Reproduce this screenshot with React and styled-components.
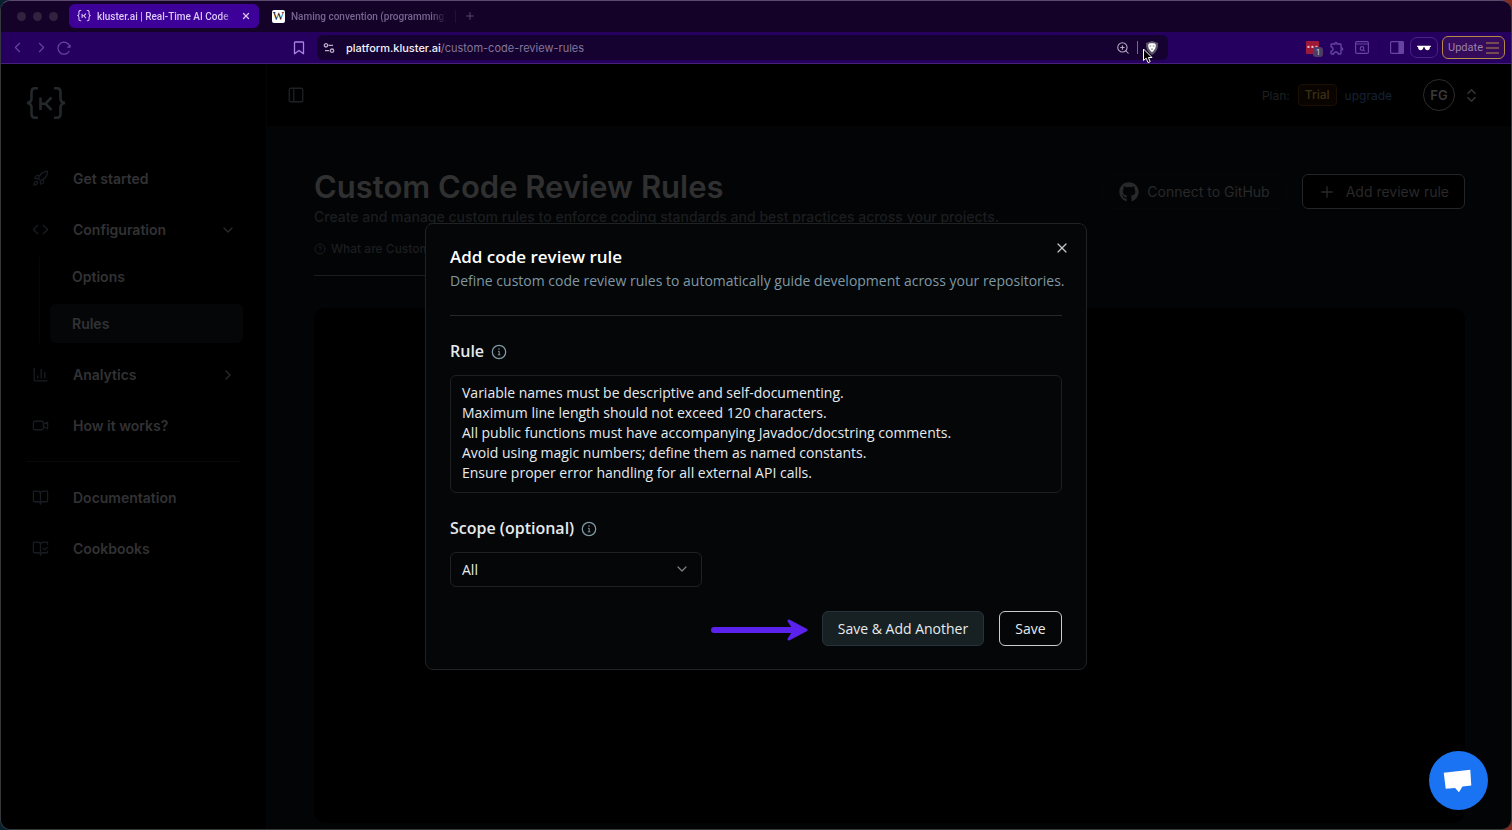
import React from "react";
import styled, { createGlobalStyle, css } from "styled-components";
import {
  Rocket, Code, ChartColumn, Video, BookOpen, BookOpenCheck, ChevronDown, ChevronRight,
  ChevronLeft, PanelLeft, ChevronsUpDown, Plus, CircleHelp, X, ZoomIn,
} from "lucide-react";
import { FaGithub } from "react-icons/fa";
import { MdOutlineExtension } from "react-icons/md";

const Global = createGlobalStyle`
  *, *::before, *::after { box-sizing: border-box; }
  body {
    margin: 0;
    background: linear-gradient(to right, #06202e, #0a0a10 50%, #8a2c1c);
    font-family: Inter, "Liberation Sans", sans-serif;
  }
  button, input, textarea, select { font: inherit; margin: 0; }
  button { cursor: pointer; }
  h1, h2, p { margin: 0; }
  a { color: inherit; text-decoration: none; }
  svg { display: block; flex: none; }
`;

const Browser = styled.div`
  min-height: 100vh;
  display: flex;
  flex-direction: column;
  border: 1px solid #37383c;
  border-top-color: #5a4a6c;
  border-radius: 10px;
  overflow: hidden;
  font-size: 14px;
`;

const TabStrip = styled.div`
  height: 31px;
  flex: none;
  display: flex;
  align-items: center;
  background: #150229;
  padding: 0 16px 1px;
  font-family: Roboto, "Liberation Sans", sans-serif;
  font-size: 10px;
`;

const Lights = styled.div`
  display: flex;
  gap: 7px;
  margin-right: 11px;
`;

const Light = styled.span`
  width: 9px;
  height: 9px;
  border-radius: 50%;
  background: #32213f;
`;

const Tab = styled.div`
  width: ${(p) => (p.$active ? 190 : 196)}px;
  height: 24px;
  border-radius: 6px;
  display: flex;
  align-items: center;
  gap: 6px;
  padding: 0 8px;
  background: ${(p) => (p.$active ? "#3d0098" : "transparent")};
  color: ${(p) => (p.$active ? "#d9c8f5" : "#77648f")};
`;

const TabTitle = styled.span`
  flex: 1;
  min-width: 0;
  overflow: hidden;
  white-space: nowrap;
  font-weight: 500;
  mask-image: linear-gradient(to right, #000 90%, transparent);
`;

const WikiMark = styled.span`
  width: 13px;
  height: 13px;
  margin-left: 5px;
  border-radius: 2px;
  background: #fff;
  color: #111;
  font: 12px/13px "Liberation Serif", serif;
  text-align: center;
`;

const Bare = styled.button`
  display: flex;
  align-items: center;
  justify-content: center;
  padding: 0;
  border: 0;
  background: none;
  color: inherit;
`;

const NewTab = styled(Bare)`
  margin-left: 8px;
  color: #55446c;
`;

const Toolbar = styled.div`
  height: 32px;
  flex: none;
  display: flex;
  align-items: center;
  background: #25005f;
  border-bottom: 1px solid #48207c;
  color: #6645a0;
`;

const NavTools = styled.div`
  width: 316px;
  flex: none;
  display: flex;
  align-items: center;
  gap: 7px;
  padding: 0 12px 0 8px;
  & > :last-child { margin-left: auto; color: #a684e0; }
`;

const AddressBar = styled.div`
  flex: 1;
  min-width: 0;
  height: 25px;
  border-radius: 6px;
  background: #150230;
  display: flex;
  align-items: center;
  gap: 7px;
  padding: 0 9px 0 6px;
  color: #b8aec6;
`;

const Address = styled.div`
  flex: 1;
  min-width: 0;
  padding-left: 4px;
  font-size: 11px;
  color: #83779a;
  & > b { color: #f3f0f8; font-weight: 500; }
`;

const ShieldWrap = styled.span`
  position: relative;
`;

const Cursor = styled.svg`
  position: absolute;
  left: -3px;
  top: 7px;
`;

const Separator = styled.span`
  width: 1px;
  height: 13px;
  background: ${(p) => p.$color};
`;

const Extensions = styled.div`
  width: 343px;
  flex: none;
  display: flex;
  align-items: center;
  justify-content: flex-end;
  gap: 10px;
  padding-right: 6px;
`;

const Extension = styled(Bare)`
  position: relative;
`;

const RedMark = styled.span`
  width: 13px;
  height: 13px;
  border-radius: 1px;
  background: #9e1838;
  color: #e9b8c4;
  font-size: 7px;
  line-height: 12px;
`;

const Count = styled.span`
  position: absolute;
  left: 7px;
  top: 6px;
  width: 10px;
  height: 10px;
  border-radius: 3px;
  background: #4b3d68;
  color: #cfc5dd;
  font-size: 8px;
  line-height: 10px;
`;

const PrivateBadge = styled(Bare)`
  width: 28px;
  height: 21px;
  margin-left: -4px;
  border: 1px solid #49228a;
  border-radius: 7px;
`;

const Update = styled(Bare)`
  width: 63px;
  height: 23px;
  margin-left: -6px;
  gap: 3px;
  border: 1px solid #b68b45;
  border-radius: 6px;
  background: #350b5c;
  color: #9a82a8;
  font-family: Roboto, "Liberation Sans", sans-serif;
  font-size: 11px;
`;

const Page = styled.div`
  flex: 1;
  display: flex;
  position: relative;
`;

const Sidebar = styled.aside`
  width: 266px;
  flex: none;
  background: #000;
  border-right: 1px solid #050607;
  color: #323234;
  font-weight: 600;
  padding: 23px 25px 0;
`;

const Logo = styled.div`
  height: 32px;
  margin-bottom: 40px;
  color: #23282a;
`;

const Nav = styled.nav`
  display: flex;
  flex-direction: column;
  gap: 12px;
`;

const navRow = css`
  display: flex;
  align-items: center;
  height: 39px;
  border-radius: 6px;
`;

const NavItem = styled.a`
  ${navRow}
  gap: 24px;
  padding: 0 5px 0 6px;
  & > svg { color: #181c22; }
  & > svg:last-child { margin-left: auto; color: #2a2a2c; }
`;

const SubNav = styled.div`
  display: flex;
  flex-direction: column;
  gap: 8px;
  margin: -4px -2px 0 13px;
  padding: 0 0 0 10px;
  border-left: 1px solid #060708;
`;

const SubItem = styled.a`
  ${navRow}
  padding: 0 22px;
  background: ${(p) => (p.$active ? "#040608" : "transparent")};
`;

const NavDivider = styled.hr`
  width: 100%;
  margin: 4px 0;
  border: 0;
  border-top: 1px solid #08090a;
`;

const Main = styled.div`
  flex: 1;
  min-width: 0;
  display: flex;
  flex-direction: column;
  background: #030406;
`;

const Header = styled.header`
  height: 62px;
  flex: none;
  display: flex;
  align-items: center;
  background: #000;
  padding: 0 31px 0 20px;
  color: #1e2022;
`;

const Account = styled.div`
  margin-left: auto;
  display: flex;
  align-items: center;
  gap: 8px;
  font-size: 12px;
`;

const Trial = styled.span`
  padding: 0 6px;
  height: 22px;
  line-height: 20px;
  border: 1px solid #1b0e02;
  border-radius: 4px;
  background: #090400;
  color: #3b3013;
  font-weight: 500;
`;

const Upgrade = styled.a`
  color: #152235;
  margin-right: 23px;
`;

const Avatar = styled.button`
  width: 32px;
  height: 32px;
  padding: 0;
  border: 1px solid #2c2c2d;
  border-radius: 50%;
  background: none;
  color: #3a3a3b;
  font-size: 13px;
  font-weight: 600;
`;

const Content = styled.main`
  flex: 1;
  display: flex;
  flex-direction: column;
  padding: 44px 46px 6px 47px;
`;

const TitleRow = styled.div`
  display: flex;
  justify-content: space-between;
  align-items: flex-start;
  margin-bottom: 32px;
`;

const Intro = styled.div`
  display: flex;
  flex-direction: column;
  border-bottom: 1px solid #1b1c1e;
  color: #1b1e20;
  padding-bottom: 18px;
`;

const PageTitle = styled.h1`
  color: #303031;
  font-size: 31px;
  line-height: 34px;
  font-weight: 600;
`;

const Subtitle = styled.p`
  line-height: 20px;
  margin: 3px 0 14px;
  font-weight: 500;
`;

const HelpLink = styled.a`
  display: flex;
  align-items: center;
  gap: 5px;
  font-size: 12px;
  line-height: 16px;
  font-weight: 500;
`;

const Actions = styled.div`
  display: flex;
  gap: 15px;
  padding-top: 4px;
`;

const Action = styled.button`
  display: flex;
  align-items: center;
  height: 35px;
  gap: ${(p) => (p.$primary ? 10 : 8)}px;
  padding: 0 ${(p) => (p.$primary ? 15 : 16)}px;
  border: 1px solid ${(p) => (p.$primary ? "#242526" : "#050608")};
  border-radius: 6px;
  background: ${(p) => (p.$primary ? "#000" : "transparent")};
  color: #29292a;
`;

const RulesPanel = styled.section`
  flex: 1;
  border-radius: 12px;
  background: #000;
`;

const Overlay = styled.div`
  position: absolute;
  inset: 0;
  display: flex;
  align-items: center;
  justify-content: center;
`;

const Dialog = styled.form`
  position: relative;
  width: 662px;
  max-width: 100%;
  padding: 23px 24px;
  border: 1px solid #202224;
  border-radius: 8px;
  background: #040608;
  color: #e6ebee;
  display: flex;
  flex-direction: column;
  gap: 24px;
  font-family: "Open Sans", "Liberation Sans", sans-serif;
`;

const DialogHead = styled.div`
  display: flex;
  flex-direction: column;
  gap: 4px;
  padding-bottom: 24px;
  border-bottom: 1px solid #25272a;
`;

const DialogTitle = styled.h2`
  color: #fff;
  font-size: 17px;
  line-height: 20px;
  font-weight: 600;
`;

const DialogText = styled.p`
  margin-right: -8px;
  line-height: 20px;
  color: #7f98a4;
`;

const Close = styled(Bare)`
  position: absolute;
  right: 16px;
  top: 16px;
  width: 16px;
  height: 16px;
  color: #c4c6c8;
`;

const Field = styled.div`
  display: flex;
  flex-direction: column;
  gap: 12px;
`;

const LabelRow = styled.div`
  display: flex;
  align-items: center;
  gap: 7px;
  font-size: 16px;
  line-height: 23px;
  font-weight: 600;
  color: #e6eaec;
  & > svg { color: #7f98a4; }
`;

const RuleText = styled.textarea`
  display: block;
  width: 100%;
  height: 118px;
  padding: 7px 11px;
  border: 1px solid #1d1f21;
  border-radius: 6px;
  background: transparent;
  color: inherit;
  line-height: 20px;
  resize: none;
  outline: none;
  overflow: hidden;
`;

const SelectBox = styled.div`
  position: relative;
  width: 252px;
  & > svg {
    position: absolute;
    right: 12px;
    top: 9px;
    color: #808284;
    pointer-events: none;
  }
`;

const Select = styled.select`
  display: block;
  width: 100%;
  height: 35px;
  padding: 0 11px;
  appearance: none;
  border: 1px solid #1f2123;
  border-radius: 6px;
  background: transparent;
  color: inherit;
`;

const Footer = styled.div`
  display: flex;
  align-items: center;
  justify-content: flex-end;
  gap: 15px;
`;

const Highlighted = styled.div`
  display: flex;
  align-items: center;
  gap: 13px;
`;

const DialogButton = styled.button`
  width: ${(p) => (p.$filled ? 162 : 63)}px;
  height: 35px;
  padding: 0;
  border: 1px solid ${(p) => (p.$filled ? "#26333a" : "#c9cbcc")};
  border-radius: 6px;
  background: ${(p) => (p.$filled ? "#172023" : "#040608")};
  color: inherit;
  white-space: nowrap;
`;

const Chat = styled.button`
  position: absolute;
  right: 23px;
  bottom: 19px;
  width: 59px;
  height: 59px;
  padding: 0;
  border: 0;
  border-radius: 50%;
  background: #1a73f2;
`;

const InfoIcon = () => (
  <svg width="16" height="16" viewBox="0 0 16 16" fill="none" stroke="currentColor">
    <circle cx="8" cy="8" r="6.7" strokeWidth="1.3" />
    <path d="M7 7.3h1.2v3.4M6.8 10.8h2.6" strokeWidth="1" />
    <circle cx="8" cy="5" r=".75" fill="currentColor" stroke="none" />
  </svg>
);

const KlusterLogo = ({ width, stroke }) => (
  <svg width={width} height={(width * 32) / 40} viewBox="0 0 40 32" fill="none" stroke="currentColor" strokeWidth={stroke}>
    <path d="M12 1.2H9.5Q5.5 1.2 5.5 5.2V11.5Q5.5 15.5 1 16Q5.5 16.5 5.5 20.5V26.8Q5.5 30.8 9.5 30.8H12" />
    <path d="M28 1.2H30.5Q34.5 1.2 34.5 5.2V11.5Q34.5 15.5 39 16Q34.5 16.5 34.5 20.5V26.8Q34.5 30.8 30.5 30.8H28" />
    <path d="M14.5 10.5V23M25.5 10.5L19.5 16.7L25.5 23M14.5 16.7H19.5" />
  </svg>
);

const rules = [
  "Variable names must be descriptive and self-documenting.",
  "Maximum line length should not exceed 120 characters.",
  "All public functions must have accompanying Javadoc/docstring comments.",
  "Avoid using magic numbers; define them as named constants.",
  "Ensure proper error handling for all external API calls.",
].join("\n");

const icon = { size: 17, strokeWidth: 1.8 };

export default function App() {
  return (
    <Browser>
      <Global />
      <TabStrip>
        <Lights><Light /><Light /><Light /></Lights>
        <Tab $active>
          <KlusterLogo width={14} stroke={3} />
          <TabTitle>kluster.ai | Real-Time AI Code</TabTitle>
          <Bare aria-label="Close tab"><X size={10} strokeWidth={3} /></Bare>
        </Tab>
        <Tab>
          <WikiMark>W</WikiMark>
          <TabTitle>Naming convention (programming)</TabTitle>
        </Tab>
        <Separator $color="#220a55" />
        <NewTab aria-label="New tab"><Plus size={12} strokeWidth={2} /></NewTab>
      </TabStrip>
      <Toolbar>
        <NavTools>
          <Bare aria-label="Back"><ChevronLeft size={17} strokeWidth={1.5} /></Bare>
          <Bare aria-label="Forward"><ChevronRight size={17} strokeWidth={1.5} /></Bare>
          <Bare aria-label="Reload">
            <svg width="14" height="14" viewBox="0 0 14 14" fill="none" stroke="currentColor" strokeWidth="1.2">
              <path d="M12.3 10A6 6 0 1 1 12.8 5.6" />
              <path d="M9.6 6.7H13.6V3.2Z" fill="currentColor" stroke="none" />
            </svg>
          </Bare>
          <Bare aria-label="Bookmark this page">
            <svg width="12" height="14" viewBox="0 0 12 14" fill="none" stroke="currentColor" strokeWidth="1.3">
              <path d="M1.5 1.7Q1.5 1 2.2 1H9.8Q10.5 1 10.5 1.7V12.8L6 9.4L1.5 12.8Z" strokeLinejoin="round" />
            </svg>
          </Bare>
        </NavTools>
        <AddressBar>
          <svg width="12" height="12" viewBox="0 0 12 12" fill="none" stroke="currentColor" strokeWidth="1.3">
            <circle cx="3" cy="3.3" r="1.7" /><path d="M5.5 3.3H10M2 8.7H6" /><circle cx="9" cy="8.7" r="1.7" />
          </svg>
          <Address><b>platform.kluster.ai</b>/custom-code-review-rules</Address>
          <ZoomIn size={14} strokeWidth={1.8} />
          <Separator $color="#75698a" />
          <ShieldWrap>
            <svg width="14" height="14" viewBox="0 0 14 14">
              <path d="M7 0L13 2Q13.5 10.5 7 14Q.5 10.5 1 2Z" fill="#5d5668" />
              <path d="M4.5 2.2H9.5L11 4L10.2 7.5L8.6 9.8L7 11.2L5.4 9.8L3.8 7.5L3 4Z" fill="#fff" />
              <path d="M4.6 5H6.2M7.8 5H9.4M6 8.5L7 7.7L8 8.5" stroke="#5d5668" strokeWidth=".8" fill="none" />
            </svg>
            <Cursor width="12" height="16" viewBox="0 0 12 16"><path d="M1.5 1V12.5L4.2 10.2L6 14.6L8.2 13.7L6.4 9.5H10Z" fill="#000" stroke="#fff" /></Cursor>
          </ShieldWrap>
        </AddressBar>
        <Extensions>
          <Extension aria-label="Password manager"><RedMark>•••</RedMark><Count>1</Count></Extension>
          <Bare aria-label="Extensions"><MdOutlineExtension size={16} /></Bare>
          <Bare aria-label="Search tabs">
            <svg width="14" height="13" viewBox="0 0 14 13" fill="none" stroke="currentColor" strokeWidth="1.2">
              <rect x=".6" y=".6" width="12.8" height="11.8" rx="1.5" /><path d="M1 3H13M8.3 8.8L9.7 10.2" /><circle cx="7" cy="7.5" r="1.8" />
            </svg>
          </Bare>
          <Separator $color="#1a0638" />
          <Bare aria-label="Side panel">
            <svg width="14" height="13" viewBox="0 0 14 13" fill="none" stroke="currentColor" strokeWidth="1.2">
              <rect x=".6" y=".6" width="12.8" height="11.8" rx="1" /><path d="M9 1H13V12H9Z" fill="currentColor" />
            </svg>
          </Bare>
          <PrivateBadge aria-label="Private window">
            <svg width="14" height="6" viewBox="0 0 16 7"><path d="M0 .8H16V2.3H15Q14.6 6 12 6Q9.3 6 8.7 2.5H7.3Q6.7 6 4 6Q1.4 6 1 2.3H0Z" fill="#fff" /></svg>
          </PrivateBadge>
          <Update>
            Update
            <svg width="13" height="12" viewBox="0 0 13 12" stroke="#b68b45" strokeWidth="1.2"><path d="M0 1H13M0 6H13M0 11H13" /></svg>
          </Update>
        </Extensions>
      </Toolbar>

      <Page>
        <Sidebar>
          <Logo><KlusterLogo width={40} stroke={2.6} /></Logo>
          <Nav>
            <NavItem href="#start"><Rocket {...icon} /><span>Get started</span></NavItem>
            <NavItem href="#config"><Code {...icon} /><span>Configuration</span><ChevronDown size={16} /></NavItem>
            <SubNav>
              <SubItem href="#options">Options</SubItem>
              <SubItem href="#rules" $active>Rules</SubItem>
            </SubNav>
            <NavItem href="#analytics"><ChartColumn {...icon} /><span>Analytics</span><ChevronRight size={16} /></NavItem>
            <NavItem href="#how"><Video {...icon} /><span>How it works?</span></NavItem>
            <NavDivider />
            <NavItem href="#docs"><BookOpen {...icon} /><span>Documentation</span></NavItem>
            <NavItem href="#cookbooks"><BookOpenCheck {...icon} /><span>Cookbooks</span></NavItem>
          </Nav>
        </Sidebar>
        <Main>
          <Header>
            <Bare aria-label="Toggle sidebar"><PanelLeft size={18} strokeWidth={1.8} /></Bare>
            <Account>
              <span>Plan:</span>
              <Trial>Trial</Trial>
              <Upgrade href="#upgrade">upgrade</Upgrade>
              <Avatar>FG</Avatar>
              <ChevronsUpDown size={17} color="#333334" />
            </Account>
          </Header>
          <Content>
            <TitleRow>
              <Intro>
                <PageTitle>Custom Code Review Rules</PageTitle>
                <Subtitle>Create and manage custom rules to enforce coding standards and best practices across your projects.</Subtitle>
                <HelpLink href="#help"><CircleHelp size={12} />What are Custom</HelpLink>
              </Intro>
              <Actions>
                <Action><FaGithub size={20} />Connect to GitHub</Action>
                <Action $primary><Plus size={18} strokeWidth={1.8} />Add review rule</Action>
              </Actions>
            </TitleRow>
            <RulesPanel aria-label="Rules" />
          </Content>
        </Main>
        <Overlay>
          <Dialog role="dialog" aria-labelledby="dialog-title" onSubmit={(e) => e.preventDefault()}>
            <DialogHead>
              <DialogTitle id="dialog-title">Add code review rule</DialogTitle>
              <DialogText>Define custom code review rules to automatically guide development across your repositories.</DialogText>
            </DialogHead>
            <Field>
              <LabelRow><label htmlFor="rule">Rule</label><InfoIcon /></LabelRow>
              <RuleText id="rule" spellCheck={false} defaultValue={rules} />
            </Field>
            <Field>
              <LabelRow><label htmlFor="scope">Scope (optional)</label><InfoIcon /></LabelRow>
              <SelectBox>
                <Select id="scope"><option>All</option></Select>
                <ChevronDown size={16} strokeWidth={1.8} />
              </SelectBox>
            </Field>
            <Footer>
              <Highlighted>
                <svg width="98" height="24" viewBox="0 0 98 24" fill="none" stroke="#5b22ee">
                  <path d="M3 13H84" strokeWidth="6" strokeLinecap="round" />
                  <path d="M78 4L95 13L78 22L84 13Z" fill="#5b22ee" strokeWidth="3" strokeLinejoin="round" />
                </svg>
                <DialogButton type="button" $filled>Save &amp; Add Another</DialogButton>
              </Highlighted>
              <DialogButton type="submit">Save</DialogButton>
            </Footer>
            <Close type="button" aria-label="Close"><X size={16} strokeWidth={1.8} /></Close>
          </Dialog>
        </Overlay>
        <Chat aria-label="Open chat">
          <svg width="59" height="59" viewBox="0 0 60 60"><path d="M15 22L42 19L43 35L34 36L30.5 42L26.5 37.5L17 38.5Z" fill="#fff" /></svg>
        </Chat>
      </Page>
    </Browser>
  );
}
